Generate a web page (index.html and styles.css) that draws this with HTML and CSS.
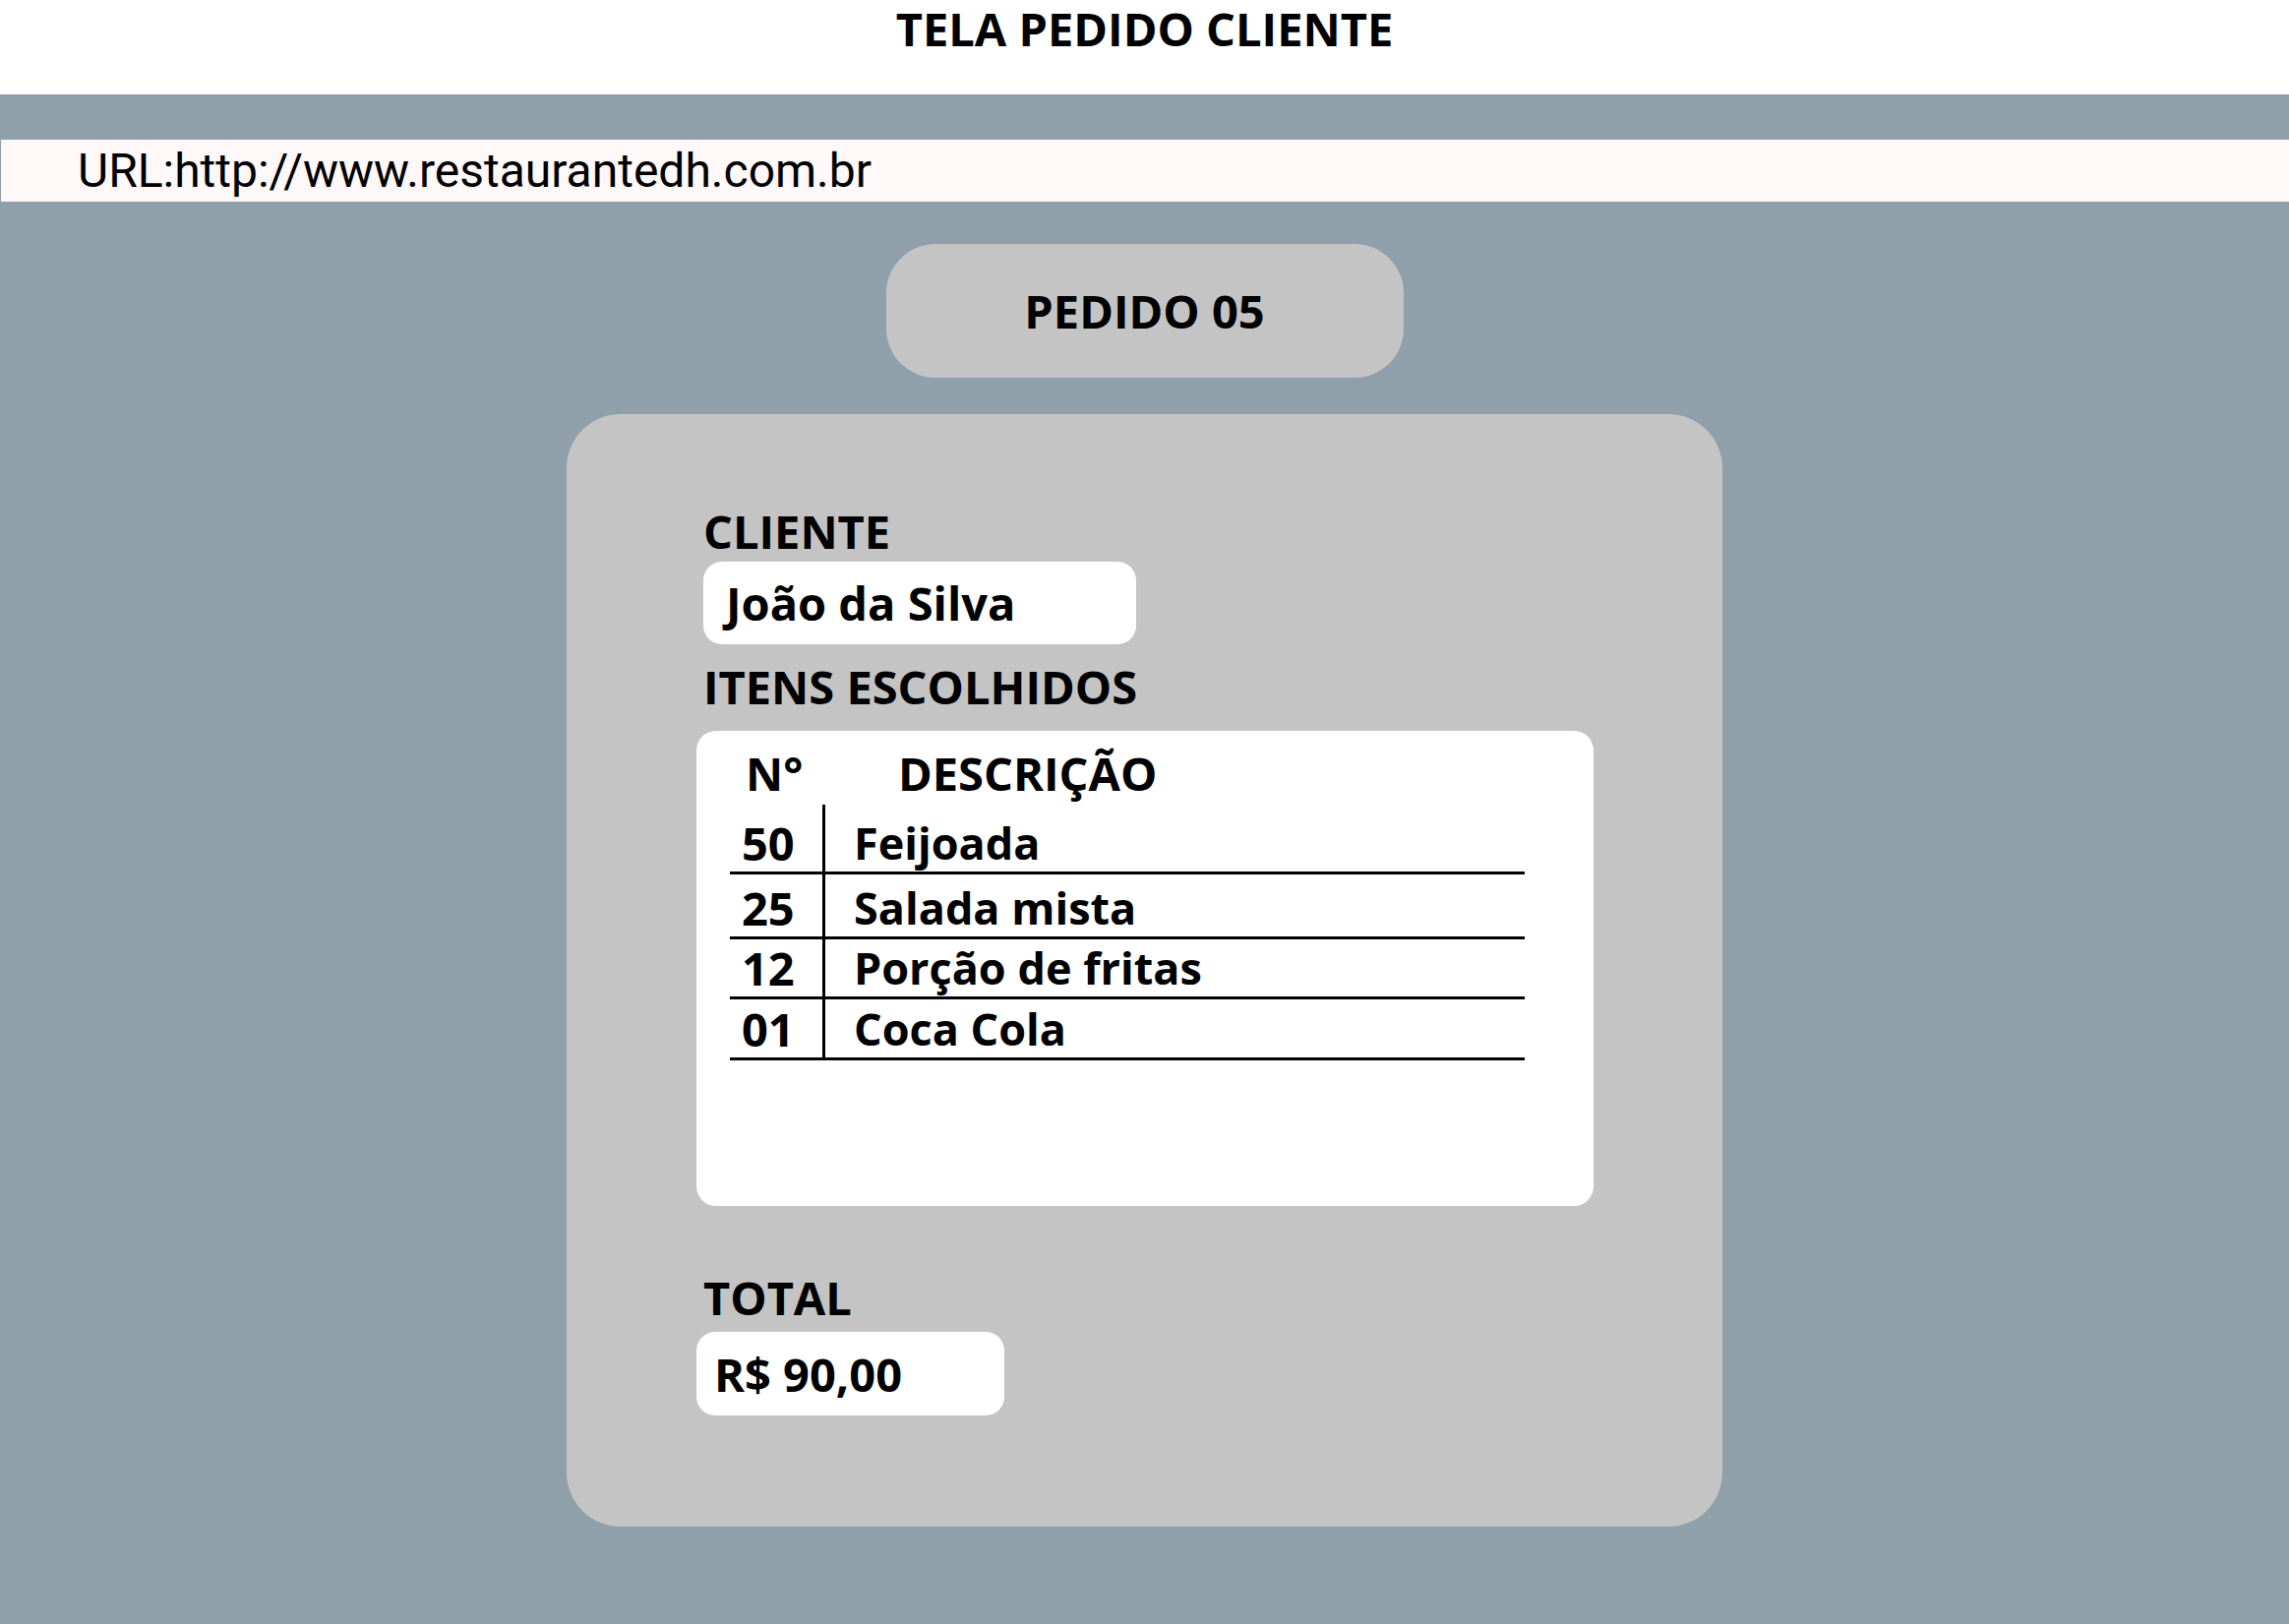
FILE: index.html
```html
<!DOCTYPE html>
<html lang="pt-BR">
<head>
<meta charset="utf-8">
<title>Tela Pedido Cliente</title>
<link rel="stylesheet" href="styles.css">
</head>
<body>
<header class="top">
  <h1 class="top-title">TELA PEDIDO CLIENTE</h1>
</header>
<main class="stage">
  <div class="url-bar">URL:http://www.restaurantedh.com.br</div>
  <div class="order-pill">PEDIDO 05</div>
  <section class="card">
    <div class="label">CLIENTE</div>
    <div class="field field-name">João da Silva</div>
    <div class="label label-items">ITENS ESCOLHIDOS</div>
    <div class="items">
      <div class="items-head">
        <span class="head-num">N°</span>
        <span class="head-desc">DESCRIÇÃO</span>
      </div>
      <div class="items-rows">
        <div class="row row-first"><span class="num">50</span><span class="desc">Feijoada</span></div>
        <div class="row row-second"><span class="num">25</span><span class="desc">Salada mista</span></div>
        <div class="row row-third"><span class="num">12</span><span class="desc">Porção de fritas</span></div>
        <div class="row"><span class="num">01</span><span class="desc">Coca Cola</span></div>
      </div>
    </div>
    <div class="label label-total">TOTAL</div>
    <div class="field field-total">R$ 90,00</div>
  </section>
</main>
</body>
</html>
```
FILE: styles.css
```css
* { box-sizing: border-box; }
html, body { margin: 0; padding: 0; }
body {
  background: #ffffff;
  font-family: "Open Sans", "DejaVu Sans", sans-serif;
  color: #000;
}
.top {
  height: 96px;
  padding-top: 5px;
  text-align: center;
}
.top-title {
  margin: 0;
  font-size: 47px;
  line-height: 48px;
  font-weight: 700;
}
.stage {
  background: #8fa0aa;
  min-height: 1555px;
  padding-top: 46px;
  display: flex;
  flex-direction: column;
  align-items: center;
}
.url-bar {
  align-self: stretch;
  margin-left: 1px;
  height: 63px;
  background: #fff8f8;
  display: flex;
  align-items: center;
  padding-left: 78px;
  font-family: Roboto, "Liberation Sans", sans-serif;
  font-size: 48px;
  font-weight: 400;
}
.order-pill {
  margin-top: 43px;
  width: 526px;
  height: 136px;
  border-radius: 50px;
  background: #c4c4c4;
  display: flex;
  align-items: center;
  justify-content: center;
  font-size: 47px;
  font-weight: 700;
}
.card {
  margin-top: 37px;
  width: 1175px;
  height: 1131px;
  border-radius: 55px;
  background: #c4c4c4;
  padding: 96px 0 0 132px;
  display: flex;
  flex-direction: column;
  align-items: flex-start;
}
.label {
  margin-left: 7px;
  font-size: 47px;
  line-height: 47px;
  font-weight: 700;
}
.label-items { margin-top: 20px; }
.label-total { margin-top: 70px; }
.field {
  background: #fff;
  border-radius: 19px;
  display: flex;
  align-items: center;
  font-weight: 700;
}
.field-name {
  margin: 7px 0 0 7px;
  width: 440px;
  height: 84px;
  padding-left: 23px;
  font-size: 47px;
}
.field-total {
  margin-top: 11px;
  width: 313px;
  height: 85px;
  padding-left: 18px;
  font-size: 47px;
}
.items {
  margin-top: 21px;
  width: 912px;
  height: 483px;
  background: #fff;
  border-radius: 20px;
  padding-top: 20px;
}
.items-head {
  display: flex;
  font-size: 47px;
  line-height: 47px;
  font-weight: 700;
}
.head-num { margin-left: 50px; width: 155px; }
.items-rows {
  margin: 8px 0 0 34px;
  width: 808px;
}
.row {
  display: flex;
  align-items: stretch;
  height: 62px;
  border-bottom: 3px solid #000;
  font-size: 45px;
  line-height: 45px;
  font-weight: 700;
}
.row-first { height: 71px; }
.row-second { height: 66px; }
.row-third { height: 61px; }
.num {
  width: 97px;
  border-right: 3px solid #000;
  padding: 0 0 6px 12px;
  display: flex;
  align-items: flex-end;
  font-size: 47px;
}
.desc {
  padding: 0 0 7px 29px;
  display: flex;
  align-items: flex-end;
}
```
